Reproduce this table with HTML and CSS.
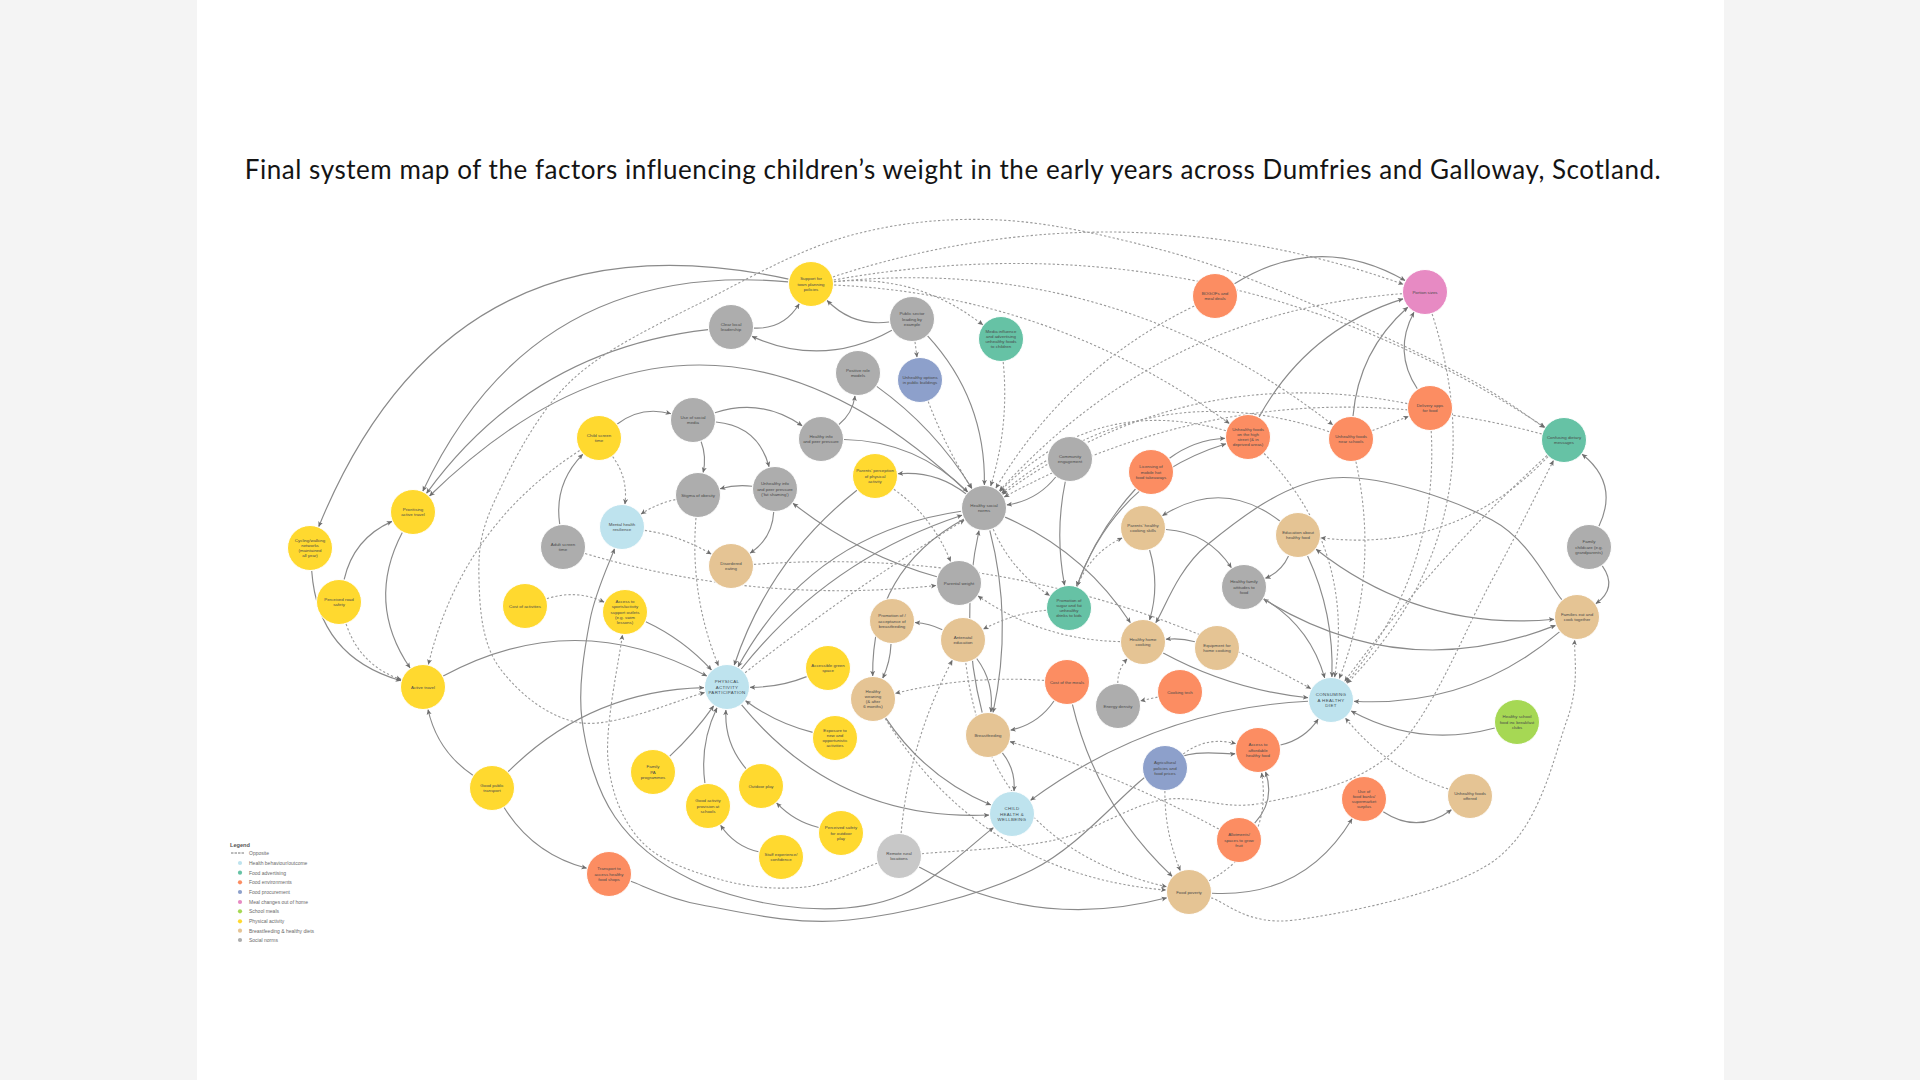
FILE: index.html
```html
<!DOCTYPE html>
<html lang="en">
<head>
<meta charset="utf-8">
<title>Final system map</title>
<link rel="stylesheet" href="styles.css">
</head>
<body>
<main class="slide">
  <h1 class="title">Final system map of the factors influencing children’s weight in the early years across Dumfries and Galloway, Scotland.</h1>
  <svg class="map" id="map" viewBox="195 200 1527 760" width="1527" height="760" xmlns="http://www.w3.org/2000/svg">
    <defs>
      <marker id="ah" viewBox="0 0 10 10" refX="9.5" refY="5" markerWidth="5.5" markerHeight="5.5" markerUnits="userSpaceOnUse" orient="auto">
        <path class="arrow" d="M0,0.5 L10,5 L0,9.5 L2.5,5 z"/>
      </marker>
      <marker id="ahs" viewBox="0 0 10 10" refX="9.5" refY="5" markerWidth="5.5" markerHeight="5.5" markerUnits="userSpaceOnUse" orient="auto-start-reverse">
        <path class="arrow" d="M0,0.5 L10,5 L0,9.5 L2.5,5 z"/>
      </marker>
    </defs>
    <g id="edges"></g>
    <g id="nodes"></g>
    <g class="legend">
      <text class="lg-title" x="228" y="847">Legend</text>
      <line class="lg-line" x1="229" y1="853" x2="242" y2="853"/>
      <text class="lg-text" x="247" y="854.8">Opposite</text>
      <circle class="lg-dot n-c" cx="238" cy="863" r="2.1"/>
      <text class="lg-text" x="247" y="864.8">Health behaviour/outcome</text>
      <circle class="lg-dot n-t" cx="238" cy="872.7" r="2.1"/>
      <text class="lg-text" x="247" y="874.5">Food advertising</text>
      <circle class="lg-dot n-o" cx="238" cy="882.3" r="2.1"/>
      <text class="lg-text" x="247" y="884.1">Food environments</text>
      <circle class="lg-dot n-b" cx="238" cy="892" r="2.1"/>
      <text class="lg-text" x="247" y="893.8">Food procurement</text>
      <circle class="lg-dot n-p" cx="238" cy="902" r="2.1"/>
      <text class="lg-text" x="247" y="903.8">Meal changes out of home</text>
      <circle class="lg-dot n-l" cx="238" cy="911.3" r="2.1"/>
      <text class="lg-text" x="247" y="913.1">School meals</text>
      <circle class="lg-dot n-y" cx="238" cy="921.3" r="2.1"/>
      <text class="lg-text" x="247" y="923.1">Physical activity</text>
      <circle class="lg-dot n-k" cx="238" cy="930.7" r="2.1"/>
      <text class="lg-text" x="247" y="932.5">Breastfeeding &amp; healthy diets</text>
      <circle class="lg-dot n-g" cx="238" cy="940" r="2.1"/>
      <text class="lg-text" x="247" y="941.8">Social norms</text>
    </g>
  </svg>
</main>
<script src="script.js"></script>
</body>
</html>
```

FILE: styles.css
```css
html, body {
  margin: 0;
  padding: 0;
}
body {
  background: #f4f4f4;
  height: 1080px;
  overflow: hidden;
}
.slide {
  box-sizing: border-box;
  width: 1527px;
  height: 1080px;
  margin: 0 auto;
  padding-top: 153px;
  background: #ffffff;
}
.title {
  margin: 0;
  font-family: Lato, "Liberation Sans", sans-serif;
  font-weight: 400;
  font-size: 26px;
  line-height: 32px;
  letter-spacing: 0.55px;
  color: #141414;
  text-align: center;
  padding-right: 14px;
  white-space: nowrap;
}
.map {
  display: block;
  margin-top: 15px;
}
.edge {
  fill: none;
  stroke: #8a8a8a;
  stroke-width: 1.15;
}
.edge.dash {
  stroke: #9a9a9a;
  stroke-width: 1.1;
  stroke-dasharray: 2.3 2.1;
}
.arrow {
  fill: #6e6e6e;
}
.node {
  stroke: #ffffff;
  stroke-width: 1;
}
.n-y { fill: #ffd92f; }
.n-g { fill: #adadad; }
.n-o { fill: #fc8d62; }
.n-p { fill: #e78ac3; }
.n-t { fill: #66c2a5; }
.n-b { fill: #8da0cb; }
.n-k { fill: #e5c494; }
.n-l { fill: #a6d854; }
.n-c { fill: #bee3ee; }
.n-r { fill: #c8c8c8; }
.lbl {
  font-family: "Liberation Sans", Arial, sans-serif;
  font-size: 4.4px;
  fill: #4a4a4a;
  text-anchor: middle;
}
.lbl.caps {
  letter-spacing: 0.35px;
  fill: #3c4a50;
}
.lg-title {
  font-family: "Liberation Sans", Arial, sans-serif;
  font-size: 5.6px;
  font-weight: 700;
  fill: #555555;
}
.lg-text {
  font-family: "Liberation Sans", Arial, sans-serif;
  font-size: 5px;
  fill: #6a6a6a;
}
.lg-line {
  stroke: #777777;
  stroke-width: 1;
  stroke-dasharray: 2.5 1;
}
```

FILE: script.js
```js
(function () {
  var NODES = {
    SUP: [809, 284, 'y', 'Support for|town planning|policies'],
    CLL: [729, 327, 'g', 'Clear local|leadership'],
    PSL: [910, 319, 'g', 'Public sector|leading by|example'],
    MED: [999, 339, 't', 'Media influence|and advertising|unhealthy foods|to children'],
    BOG: [1213, 296, 'o', 'BOGOFs and|meal deals'],
    POR: [1423, 292, 'p', 'Portion sizes'],
    PRM: [856, 373, 'g', 'Positive role|models'],
    UOP: [918, 380, 'b', 'Unhealthy options|in public buildings'],
    USM: [691, 420, 'g', 'Use of social|media'],
    CST: [597, 438, 'y', 'Child screen|time'],
    HIP: [819, 439, 'g', 'Healthy info|and peer pressure'],
    COM: [1068, 459, 'g', 'Community|engagement'],
    LIC: [1149, 472, 'o', 'Licensing of|mobile hot|food takeaways'],
    UHS: [1246, 437, 'o', 'Unhealthy foods|on the high|street (& in|deprived areas)'],
    UNS: [1349, 439, 'o', 'Unhealthy foods|near schools'],
    DEL: [1428, 408, 'o', 'Delivery apps|for food'],
    CDM: [1562, 440, 't', 'Confusing dietary|messages'],
    PAT: [411, 512, 'y', 'Prioritising|active travel'],
    CYC: [308, 548, 'y', 'Cycling/walking|networks|(maintained|all year)'],
    STG: [696, 495, 'g', 'Stigma of obesity'],
    UIP: [773, 489, 'g', 'Unhealthy info|and peer pressure|(\u2018fat shaming\u2019)'],
    PPA: [873, 476, 'y', 'Parents\u2019 perception|of physical|activity'],
    HSN: [982, 508, 'g', 'Healthy social|norms'],
    MHR: [620, 527, 'c', 'Mental health|resilience'],
    AST: [561, 547, 'g', 'Adult screen|time'],
    DIS: [729, 566, 'k', 'Disordered|eating'],
    PCS: [1141, 528, 'k', 'Parents\u2019 healthy|cooking skills'],
    EHF: [1296, 535, 'k', 'Education about|healthy food'],
    FCC: [1587, 547, 'g', 'Family|childcare (e.g.|grandparents)'],
    PRS: [337, 602, 'y', 'Perceived road|safety'],
    COA: [523, 606, 'y', 'Cost of activities'],
    ASA: [623, 612, 'y', 'Access to|sports/activity|support outlets|(e.g. swim|lessons)'],
    PW: [957, 583, 'g', 'Parental weight'],
    HFA: [1242, 587, 'g', 'Healthy family|attitudes to|food'],
    PRO: [1067, 608, 't', 'Promotion of|sugar and fat|unhealthy|drinks to kids'],
    PAB: [890, 621, 'k', 'Promotion of /|acceptance of|breastfeeding'],
    ANT: [961, 640, 'k', 'Antenatal|education'],
    HHC: [1141, 642, 'k', 'Healthy home|cooking'],
    EQP: [1215, 648, 'k', 'Equipment for|home cooking'],
    FEC: [1575, 617, 'k', 'Families eat and|cook together'],
    AT: [421, 687, 'y', 'Active travel'],
    PAP: [725, 687, 'c', 'PHYSICAL|ACTIVITY|PARTICIPATION'],
    AGS: [826, 668, 'y', 'Accessible green|space'],
    HW: [871, 699, 'k', 'Healthy|weaning|(& after|6 months)'],
    CM: [1065, 682, 'o', 'Cost of the meals'],
    CTE: [1178, 692, 'o', 'Cooking tech'],
    END: [1116, 706, 'g', 'Energy density'],
    CHD: [1329, 700, 'c', 'CONSUMING|A HEALTHY|DIET'],
    HSF: [1515, 722, 'l', 'Healthy school|food inc breakfast|clubs'],
    EXO: [833, 738, 'y', 'Exposure to|new and|opportunistic|activities'],
    BF: [986, 735, 'k', 'Breastfeeding'],
    AGR: [1163, 768, 'b', 'Agricultural|policies and|food prices'],
    AAF: [1256, 750, 'o', 'Access to|affordable|healthy food'],
    GPT: [490, 788, 'y', 'Good public|transport'],
    FPA: [651, 772, 'y', 'Family|PA|programmes'],
    OP: [759, 786, 'y', 'Outdoor play'],
    CHW: [1010, 814, 'c', 'CHILD|HEALTH &|WELLBEING'],
    UFB: [1362, 799, 'o', 'Use of|food banks/|supermarket|surplus'],
    UFO: [1468, 796, 'k', 'Unhealthy foods|offered'],
    GAP: [706, 806, 'y', 'Good activity|provision at|schools'],
    PSO: [839, 833, 'y', 'Perceived safety|for outdoor|play'],
    STF: [779, 857, 'y', 'Staff experience/|confidence'],
    RRL: [897, 856, 'r', 'Remote rural|locations'],
    ALL: [1237, 840, 'o', 'Allotments/|spaces to grow|fruit'],
    TAF: [607, 874, 'o', 'Transport to|access healthy|food shops'],
    FP: [1187, 892, 'k', 'Food poverty']
  };
  var CAPS = { PAP: 1, CHD: 1, CHW: 1 };

  var EDGES = [
    ['SUP', 'CYC', 0.42], ['SUP', 'PAT', 0.35], ['CLL', 'PAT', 0.22], ['HSN', 'PAT', 0.48],
    ['CLL', 'SUP', 0.3], ['PSL', 'SUP', -0.25], ['PSL', 'CLL', -0.25], ['PSL', 'HSN', -0.2],
    ['PSL', 'UOP', 0, 'd'], ['SUP', 'MED', -0.2, 'd'], ['SUP', 'POR', -0.17, 'd'],
    ['SUP', 'CDM', -0.2, 'd'], ['SUP', 'UHS', -0.15, 'd'], ['SUP', 'UNS', -0.2, 'd'],
    ['BOG', 'POR', -0.3], ['UHS', 'POR', -0.2], ['UNS', 'POR', -0.2], ['DEL', 'POR', -0.3],
    ['UNS', 'DEL', 0, 'd'],
    ['BOG', 'HSN', 0.15, 'd'], ['POR', 'HSN', 0.2, 'd'], ['DEL', 'HSN', 0.22, 'd'],
    ['UNS', 'HSN', 0.28, 'd'], ['UHS', 'HSN', 0.3, 'd'], ['CDM', 'HSN', 0.2, 'd'],
    ['MED', 'HSN', -0.1, 'd'], ['UOP', 'HSN', 0.05, 'd'],
    ['USM', 'STG', -0.15], ['USM', 'UIP', -0.35], ['USM', 'HIP', -0.25], ['CST', 'USM', -0.25],
    ['HIP', 'PRM', 0.2], ['HIP', 'HSN', -0.2], ['PRM', 'HSN', -0.1],
    ['CST', 'MHR', -0.2, 'd'], ['AST', 'CST', -0.25], ['STG', 'MHR', 0.1, 'd'],
    ['MHR', 'DIS', -0.1, 'd'], ['UIP', 'DIS', -0.25], ['UIP', 'STG', 0.1],
    ['HSN', 'PPA', 0.2], ['PPA', 'PW', -0.15, 'd'], ['PW', 'UIP', -0.1], ['PPA', 'PAP', 0.15],
    ['PAP', 'HSN', -0.15], ['HSN', 'PAP', 0.25], ['PAP', 'HSN', -0.03, 'd'],
    ['HSN', 'HW', 0.3], ['HSN', 'BF', -0.12], ['BF', 'HSN', -0.12],
    ['COM', 'HSN', -0.2], ['HSN', 'HHC', -0.15], ['HSN', 'PRO', 0.15, 'd'],
    ['COM', 'PRO', 0.1], ['LIC', 'PRO', 0.1], ['UHS', 'PRO', 0.25, 'b'], ['LIC', 'UHS', -0.15],
    ['PRO', 'PCS', -0.2, 'd'], ['PCS', 'HHC', -0.15],
    ['PAB', 'HW', -0.1], ['ANT', 'PAB', 0.1], ['ANT', 'BF', -0.2], ['CM', 'BF', -0.2],
    ['CM', 'HW', 0.08, 'd'], ['CM', 'FP', 0.15], ['END', 'HHC', -0.2, 'd'], ['CTE', 'END', 0, 'd'],
    ['HHC', 'PW', -0.15, 'd'], ['RRL', 'ANT', -0.1, 'd'], ['PRO', 'ANT', 0.1, 'd'],
    ['HW', 'FP', 0.25, 'd'], ['ANT', 'FP', 0.35, 'd'], ['RRL', 'FP', 0.2],
    ['CYC', 'AT', 0.35], ['PRS', 'PAT', -0.25], ['PRS', 'AT', 0.25, 'd'], ['PAT', 'AT', 0.3],
    ['AT', 'PAP', -0.27], ['GPT', 'PAP', -0.2], ['COA', 'ASA', -0.2, 'd'], ['ASA', 'PAP', -0.1],
    ['STG', 'PAP', 0.12, 'd'], ['AST', 'PW', 0.1, 'd'], ['CST', 'AT', 0.2, 'd'],
    ['FPA', 'PAP', 0.05], ['GAP', 'PAP', -0.15], ['OP', 'PAP', -0.2], ['EXO', 'PAP', -0.1],
    ['AGS', 'PAP', -0.1], ['PAP', 'CHW', 0.25], ['HW', 'CHW', 0.15], ['BF', 'CHW', -0.2],
    ['CHD', 'CHW', 0.15], ['PSO', 'OP', -0.15], ['STF', 'GAP', -0.2], ['GPT', 'AT', -0.2],
    ['GPT', 'TAF', 0.2], ['ALL', 'BF', 0.05, 'd'],
    ['FCC', 'FEC', -0.5], ['FCC', 'CDM', 0.4], ['FEC', 'CHD', -0.2], ['FEC', 'HFA', -0.25, 'b'],
    ['EHF', 'FEC', 0.2, 'b'], ['EHF', 'PCS', 0.35], ['PCS', 'HFA', -0.25], ['EHF', 'HFA', -0.2],
    ['EHF', 'CHD', -0.12], ['HFA', 'CHD', -0.2], ['HHC', 'CHD', 0.1], ['EQP', 'HHC', 0.1],
    ['CDM', 'EHF', -0.25, 'd'], ['CDM', 'CHD', 0.05, 'd'], ['UHS', 'CHD', -0.25, 'd'],
    ['UNS', 'CHD', -0.15, 'd'], ['DEL', 'CHD', -0.2, 'd'], ['POR', 'CHD', -0.3, 'd'],
    ['DIS', 'CHD', -0.15, 'd'], ['AGR', 'AAF', -0.25, 'd'], ['ALL', 'AAF', 0.3],
    ['FP', 'AAF', 0.35, 'd'], ['AAF', 'CHD', 0.2], ['HSF', 'CHD', -0.2], ['UFO', 'CHD', -0.15, 'd'],
    ['UFB', 'UFO', 0.35], ['FP', 'UFB', 0.3], ['AGR', 'FP', 0.1, 'd'],
    ['RRL', 'ASA', [[803, 887], [720, 880], [640, 842], [606, 760]], 'd'],
    ['CHW', 'MHR', [[900, 895], [800, 908], [690, 880], [613, 817], [580, 720], [588, 620]], 'b'],
    ['TAF', 'AAF', [[700, 905], [847, 920], [1030, 870], [1160, 765]]],
    ['FP', 'FEC', [[1293, 920], [1493, 860], [1565, 720]], 'd'],
    ['FEC', 'HHC', [[1490, 520], [1330, 478], [1205, 545]]],
    ['PAP', 'CDM', [[580, 723], [497, 667], [477, 580], [493, 500], [570, 380], [710, 297], [850, 235], [998, 220], [1160, 250], [1300, 300], [1460, 375]], 'db'],
    ['RRL', 'CDM', [[1053, 840], [1160, 800], [1260, 803], [1393, 750], [1490, 580]], 'd']
  ];

  var NS = 'http://www.w3.org/2000/svg';
  var R = 22.5;
  var gE = document.getElementById('edges');
  var gN = document.getElementById('nodes');

  function el(tag, attrs, cls) {
    var e = document.createElementNS(NS, tag);
    for (var k in attrs) e.setAttribute(k, attrs[k]);
    if (cls) e.setAttribute('class', cls);
    return e;
  }
  function trim(p, q, r) {
    var dx = q[0] - p[0], dy = q[1] - p[1];
    var l = Math.hypot(dx, dy) || 1;
    return [p[0] + dx / l * r, p[1] + dy / l * r];
  }
  function f(n) { return n.toFixed(1); }

  EDGES.forEach(function (e) {
    var A = NODES[e[0]], B = NODES[e[1]], c = e[2], fl = e[3] || '';
    var d;
    if (Array.isArray(c)) {
      var s = trim(A, c[0], R + 0.5), t = trim(B, c[c.length - 1], R + 0.5);
      var pts = [s].concat(c, [t]);
      d = 'M' + f(s[0]) + ',' + f(s[1]);
      for (var i = 0; i < pts.length - 1; i++) {
        var p0 = pts[i - 1] || pts[i], p1 = pts[i], p2 = pts[i + 1], p3 = pts[i + 2] || p2;
        var c1 = [p1[0] + (p2[0] - p0[0]) / 6, p1[1] + (p2[1] - p0[1]) / 6];
        var c2 = [p2[0] - (p3[0] - p1[0]) / 6, p2[1] - (p3[1] - p1[1]) / 6];
        d += ' C' + f(c1[0]) + ',' + f(c1[1]) + ' ' + f(c2[0]) + ',' + f(c2[1]) + ' ' + f(p2[0]) + ',' + f(p2[1]);
      }
    } else {
      var dx = B[0] - A[0], dy = B[1] - A[1];
      var C = [(A[0] + B[0]) / 2 - c * dy, (A[1] + B[1]) / 2 + c * dx];
      var s2 = trim(A, C, R + 0.5), t2 = trim(B, C, R + 0.5);
      d = 'M' + f(s2[0]) + ',' + f(s2[1]) + ' Q' + f(C[0]) + ',' + f(C[1]) + ' ' + f(t2[0]) + ',' + f(t2[1]);
    }
    var p = el('path', { d: d, 'marker-end': 'url(#ah)' }, 'edge' + (fl.indexOf('d') >= 0 ? ' dash' : ''));
    if (fl.indexOf('b') >= 0) p.setAttribute('marker-start', 'url(#ahs)');
    gE.appendChild(p);
  });

  Object.keys(NODES).forEach(function (k) {
    var n = NODES[k], x = n[0], y = n[1];
    gN.appendChild(el('circle', { cx: x, cy: y, r: R }, 'node n-' + n[2]));
    var lines = n[3].split('|');
    var lh = 5.1;
    var t = el('text', { x: x, y: y }, 'lbl' + (CAPS[k] ? ' caps' : ''));
    lines.forEach(function (ln, i) {
      var ts = el('tspan', { x: x, y: f(y + (i - (lines.length - 1) / 2) * lh + 1.5) });
      ts.textContent = ln;
      t.appendChild(ts);
    });
    gN.appendChild(t);
  });
})();
```
